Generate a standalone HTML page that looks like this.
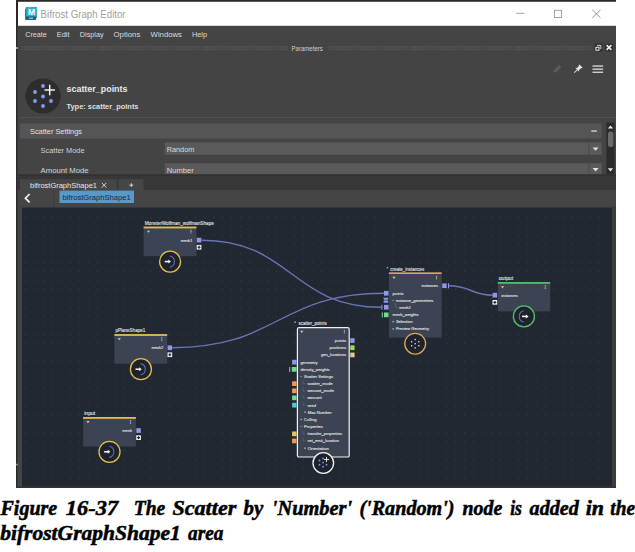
<!DOCTYPE html>
<html><head><meta charset="utf-8"><title>Bifrost Graph Editor</title>
<style>
html,body{margin:0;padding:0;background:#fff;}
body{width:635px;height:552px;overflow:hidden;position:relative;font-family:"Liberation Sans",sans-serif;}
svg{position:absolute;left:0;top:0;}
svg text{font-family:"Liberation Sans",sans-serif;}
svg text.cp{font-family:"Liberation Serif",serif;font-weight:bold;font-style:italic;stroke:#000;stroke-width:0.5px;}
</style></head><body>
<svg width="635" height="552" viewBox="0 0 635 552">
<defs>
<pattern id="dots" x="25.0" y="378.5" width="8.96" height="8.975" patternUnits="userSpaceOnUse"><rect x="0" y="0" width="1.1" height="1.1" fill="#353c47"/></pattern>
<pattern id="grip" x="22" y="46.2" width="2.08" height="1.4" patternUnits="userSpaceOnUse"><rect x="0" y="0" width="1.04" height="0.8" fill="#626262"/></pattern>
</defs>

<rect x="16" y="0" width="600" height="488" fill="#444444"/>
<rect x="16" y="0" width="600" height="1.8" fill="#2a2a2a"/>
<rect x="16" y="0" width="1.4" height="488" fill="#2a2a2a"/>
<rect x="16" y="0" width="2" height="26" fill="#2a2a2a"/>
<rect x="16" y="47" width="2" height="2" fill="#9a9a9a"/>
<rect x="16" y="463.8" width="2" height="1.6" fill="#8a8a8a"/>
<rect x="18" y="1.8" width="598" height="24" fill="#ffffff"/>
<g><path d="M26.2 7 H36.8 V17.3 L35.6 19.8 H25 V9.5 Z" fill="#1f7f9e"/><rect x="26.4" y="7" width="10.4" height="9.6" rx="1.2" fill="#2fb3d2"/><rect x="26" y="16.6" width="9.8" height="3.2" fill="#175d78"/><text x="31.6" y="14.6" font-size="8.5" font-weight="bold" fill="#fff" text-anchor="middle">M</text><rect x="28.8" y="17.6" width="4.4" height="1.2" fill="#9fd3e2"/></g>
<text x="40.6" y="17.8" font-size="11" fill="#a0a0a0" textLength="85" lengthAdjust="spacingAndGlyphs">Bifrost Graph Editor</text>
<path d="M516.3 13.3 H524.4" stroke="#9a9a9a" stroke-width="0.9" fill="none"/>
<rect x="554.4" y="10.3" width="7.2" height="7.2" stroke="#9a9a9a" stroke-width="0.9" fill="none"/>
<path d="M592.3 9.9 L600.5 17.8 M600.5 9.9 L592.3 17.8" stroke="#8a8a8a" stroke-width="0.9" fill="none"/>
<text x="25.3" y="37.2" font-size="7.6" fill="#dcdcdc" textLength="21.5" lengthAdjust="spacingAndGlyphs">Create</text>
<text x="56.7" y="37.2" font-size="7.6" fill="#dcdcdc" textLength="12.9" lengthAdjust="spacingAndGlyphs">Edit</text>
<text x="79.8" y="37.2" font-size="7.6" fill="#dcdcdc" textLength="23.8" lengthAdjust="spacingAndGlyphs">Display</text>
<text x="113.6" y="37.2" font-size="7.6" fill="#dcdcdc" textLength="26.7" lengthAdjust="spacingAndGlyphs">Options</text>
<text x="150.6" y="37.2" font-size="7.6" fill="#dcdcdc" textLength="31.4" lengthAdjust="spacingAndGlyphs">Windows</text>
<text x="191.9" y="37.2" font-size="7.6" fill="#dcdcdc" textLength="15.2" lengthAdjust="spacingAndGlyphs">Help</text>
<rect x="22" y="46.2" width="266" height="3.7" fill="url(#grip)"/>
<rect x="327" y="46.2" width="264" height="3.7" fill="url(#grip)"/>
<text x="291.5" y="51" font-size="6.8" fill="#d0d0d0" textLength="31.3" lengthAdjust="spacingAndGlyphs">Parameters</text>
<rect x="594.6" y="43.5" width="8" height="7.9" rx="1.2" fill="#2e2e2e"/>
<path d="M597.0 45.4 H600.9 V49.2" stroke="#d8d8d8" stroke-width="1" fill="none"/>
<rect x="595.9" y="47.3" width="3.1" height="2.9" stroke="#ececec" stroke-width="1" fill="#2b2b2b"/>
<rect x="605.2" y="43.5" width="7.6" height="7.9" rx="1.2" fill="#2e2e2e"/>
<path d="M606.6 45.1 L611.4 49.9 M611.4 45.1 L606.6 49.9" stroke="#eef2f6" stroke-width="1.5" fill="none"/>
<path d="M553.4 72.8 L554.2 69.8 L559.2 64.9 L561.3 67.0 L556.4 72.0 Z" fill="#5c5c5c"/>
<g transform="translate(578 69) rotate(45)"><path d="M-2.2 -4.2 H2.2 V-3 H1.5 V0 L2.8 1.2 H-2.8 L-1.5 0 V-3 H-2.2 Z M-0.4 1.2 H0.4 V4.8 L0 5.6 L-0.4 4.8 Z" fill="#e4e4e4"/></g>
<rect x="592.5" y="65.4" width="10.6" height="1.3" fill="#dcdcdc"/>
<rect x="592.5" y="68.5" width="10.6" height="1.3" fill="#dcdcdc"/>
<rect x="592.5" y="71.6" width="10.6" height="1.3" fill="#dcdcdc"/>
<circle cx="43" cy="96" r="17.6" fill="#2d2d2d"/>
<circle cx="35" cy="92" r="1.9" fill="#7fa0ec"/>
<circle cx="35" cy="101" r="1.9" fill="#7fa0ec"/>
<circle cx="43" cy="86" r="1.9" fill="#7fa0ec"/>
<circle cx="43" cy="96.5" r="1.9" fill="#7fa0ec"/>
<circle cx="43" cy="106" r="1.9" fill="#7fa0ec"/>
<circle cx="51" cy="101" r="1.9" fill="#7fa0ec"/>
<path d="M49.7 84.8 V95.2 M44.5 90 H54.9" stroke="#f2f2f2" stroke-width="1.5" fill="none"/>
<text x="66.5" y="92.3" font-size="8.8" font-weight="bold" fill="#e8e8e8" textLength="61" lengthAdjust="spacingAndGlyphs">scatter_points</text>
<text x="66.5" y="109" font-size="7.4" font-weight="bold" fill="#dedede" textLength="72" lengthAdjust="spacingAndGlyphs">Type: scatter_points</text>
<rect x="20" y="117" width="596" height="1" fill="#505050"/>
<rect x="20" y="123.5" width="581.7" height="15" fill="#555555"/>
<text x="30" y="134" font-size="7.4" fill="#e4e4e4" textLength="52" lengthAdjust="spacingAndGlyphs">Scatter Settings</text>
<rect x="591.3" y="130.4" width="5.6" height="1.3" fill="#dcdcdc"/>
<text x="40.6" y="152.6" font-size="7.6" fill="#d4d4d4" textLength="44" lengthAdjust="spacingAndGlyphs">Scatter Mode</text>
<rect x="164.8" y="142.4" width="436.9" height="12.4" fill="#5a5a5a"/>
<rect x="588.4" y="142.4" width="1" height="12.4" fill="#4a4a4a"/>
<text x="166.8" y="152" font-size="7.6" fill="#dcdcdc" textLength="27.4" lengthAdjust="spacingAndGlyphs">Random</text>
<path d="M592.6 147.4 H598.6 L595.6 150.8 Z" fill="#e0e0e0"/>
<text x="40.6" y="173.4" font-size="7.6" fill="#d4d4d4" textLength="48" lengthAdjust="spacingAndGlyphs">Amount Mode</text>
<rect x="164.8" y="163.2" width="436.9" height="11.3" fill="#5a5a5a"/>
<rect x="588.4" y="163.2" width="1" height="11.3" fill="#4a4a4a"/>
<text x="166.8" y="172.8" font-size="7.6" fill="#dcdcdc" textLength="27" lengthAdjust="spacingAndGlyphs">Number</text>
<path d="M592.6 168 H598.6 L595.6 171.4 Z" fill="#e0e0e0"/>
<rect x="606.4" y="122.6" width="8" height="51.9" fill="#2b2b2b"/>
<path d="M607.8 128.6 L610.5 125.4 L613.2 128.6 Z" fill="#e8e8e8"/>
<rect x="608" y="131.6" width="5.4" height="15.4" rx="2.2" fill="#6a6a6a"/>
<path d="M607.8 168.2 H613.2 L610.5 171.4 Z" fill="#e8e8e8"/>
<rect x="18" y="174.5" width="598" height="15.5" fill="#373737"/>
<rect x="18" y="174.5" width="598" height="1.2" fill="#303030"/>
<rect x="20" y="179.2" width="96.8" height="10.8" fill="#464646"/>
<rect x="118.3" y="179.2" width="25.2" height="10.8" fill="#464646"/>
<text x="30" y="188" font-size="7.4" fill="#e8e8e8" textLength="67" lengthAdjust="spacingAndGlyphs">bifrostGraphShape1</text>
<path d="M101.8 182.8 L106.4 187.6 M106.4 182.8 L101.8 187.6" stroke="#e0e0e0" stroke-width="0.9" fill="none"/>
<path d="M131.3 183.2 V187 M129.4 185.1 H133.2" stroke="#e0e0e0" stroke-width="0.9" fill="none"/>
<rect x="20" y="190" width="594" height="16.7" fill="#454545"/>
<path d="M29.6 194 L25.4 198.2 L29.6 202.4" stroke="#f0f0f0" stroke-width="1.7" fill="none"/>
<rect x="53.6" y="190" width="0.8" height="16.7" fill="#3a3a3a"/>
<rect x="59.5" y="190.6" width="74.5" height="12.4" fill="#5898ca"/>
<text x="62.6" y="199.6" font-size="7.4" fill="#1c2a44" textLength="68.2" lengthAdjust="spacingAndGlyphs">bifrostGraphShape1</text>
<rect x="22" y="207.6" width="590.2" height="279" fill="#222831"/>
<rect x="22" y="209" width="590.2" height="277.6" fill="url(#dots)"/>
<rect x="612.5" y="206.7" width="3.5" height="281.3" fill="#3c3c3c"/>
<rect x="16" y="486.5" width="600" height="1.5" fill="#333333"/>
<path d="M201.5 240.2 C291.5 240.2 291.5 307.3 381.5 307.3" stroke="#6b74b4" stroke-width="1.4" fill="none"/>
<path d="M172.2 347.7 C278.1 347.7 278.1 293.3 384 293.3" stroke="#6b74b4" stroke-width="1.4" fill="none"/>
<path d="M449 285.8 C470.9 285.8 470.9 295.2 492.7 295.2" stroke="#6b74b4" stroke-width="1.4" fill="none"/>
<rect x="143.6" y="226.6" width="52.8" height="29.6" fill="#3c4453"/><rect x="143.6" y="226.6" width="52.8" height="1.8" fill="#e3bd52"/><text x="144.7" y="224.85" font-size="4.9" fill="#e6e6e6" stroke="#e6e6e6" stroke-width="0.1" text-anchor="start" textLength="69.3" lengthAdjust="spacingAndGlyphs">MonsterWolfman_wolfmanShape</text><path d="M146.9 230.7 H150.1 L148.5 232.8 Z" fill="#c8ccd4"/><rect x="190.55" y="229.70" width="0.9" height="1.0" fill="#c8ccd4"/><rect x="190.55" y="231.05" width="0.9" height="1.0" fill="#c8ccd4"/><rect x="190.55" y="232.40" width="0.9" height="1.0" fill="#c8ccd4"/><text x="192.4" y="241.65" font-size="4.2" fill="#e6e6e6" stroke="#e6e6e6" stroke-width="0.1" text-anchor="end" textLength="11.6" lengthAdjust="spacingAndGlyphs">mesh1</text><rect x="196.8" y="237.8" width="4.5" height="4.7" fill="#8d97ee"/><rect x="196.7" y="244.9" width="4.7" height="4.7" fill="#f2f2f2"/><path d="M199.05 245.8 V248.7 M197.6 247.25 H200.5" stroke="#1c2028" stroke-width="1.15" fill="none"/><circle cx="170.1" cy="261.6" r="10.5" fill="#1e222a" stroke="#e3bd52" stroke-width="1.3"/><path d="M164.7 261.6 H168.9" stroke="#f0f0f0" stroke-width="1.6" fill="none"/><path d="M168.3 259.6 L171.0 261.6 L168.3 263.6 Z" fill="#f0f0f0"/><path d="M169.8 256.0 A5.7 5.7 0 0 1 169.8 267.2" stroke="#5b6db4" stroke-width="1.1" fill="none"/>
<rect x="114.4" y="334.1" width="52.8" height="29.6" fill="#3c4453"/><rect x="114.4" y="334.1" width="52.8" height="1.8" fill="#e3bd52"/><text x="115.5" y="332.35" font-size="4.9" fill="#e6e6e6" stroke="#e6e6e6" stroke-width="0.1" text-anchor="start" textLength="29.7" lengthAdjust="spacingAndGlyphs">pPlaneShape1</text><path d="M117.7 338.2 H120.9 L119.30000000000001 340.3 Z" fill="#c8ccd4"/><rect x="161.35" y="337.20" width="0.9" height="1.0" fill="#c8ccd4"/><rect x="161.35" y="338.55" width="0.9" height="1.0" fill="#c8ccd4"/><rect x="161.35" y="339.90" width="0.9" height="1.0" fill="#c8ccd4"/><text x="163.2" y="349.15" font-size="4.2" fill="#e6e6e6" stroke="#e6e6e6" stroke-width="0.1" text-anchor="end" textLength="11.8" lengthAdjust="spacingAndGlyphs">mesh2</text><rect x="167.6" y="345.4" width="4.5" height="4.7" fill="#8d97ee"/><rect x="167.5" y="352.4" width="4.7" height="4.7" fill="#f2f2f2"/><path d="M169.85 353.3 V356.2 M168.4 354.75 H171.3" stroke="#1c2028" stroke-width="1.15" fill="none"/><circle cx="140.9" cy="369.2" r="10.5" fill="#1e222a" stroke="#e3bd52" stroke-width="1.3"/><path d="M135.5 369.2 H139.7" stroke="#f0f0f0" stroke-width="1.6" fill="none"/><path d="M139.1 367.2 L141.8 369.2 L139.1 371.2 Z" fill="#f0f0f0"/><path d="M140.6 363.6 A5.7 5.7 0 0 1 140.6 374.8" stroke="#5b6db4" stroke-width="1.1" fill="none"/>
<rect x="83.1" y="417.0" width="52.8" height="29.6" fill="#3c4453"/><rect x="83.1" y="417.0" width="52.8" height="1.8" fill="#e3bd52"/><text x="84.2" y="415.25" font-size="4.9" fill="#e6e6e6" stroke="#e6e6e6" stroke-width="0.1" text-anchor="start" textLength="11" lengthAdjust="spacingAndGlyphs">input</text><path d="M86.4 421.1 H89.6 L88.0 423.2 Z" fill="#c8ccd4"/><rect x="130.05" y="420.10" width="0.9" height="1.0" fill="#c8ccd4"/><rect x="130.05" y="421.45" width="0.9" height="1.0" fill="#c8ccd4"/><rect x="130.05" y="422.80" width="0.9" height="1.0" fill="#c8ccd4"/><text x="131.9" y="432.05" font-size="4.2" fill="#e6e6e6" stroke="#e6e6e6" stroke-width="0.1" text-anchor="end" textLength="9.6" lengthAdjust="spacingAndGlyphs">mesh</text><rect x="136.3" y="428.2" width="4.5" height="4.7" fill="#8d97ee"/><rect x="136.2" y="435.3" width="4.7" height="4.7" fill="#f2f2f2"/><path d="M138.55 436.2 V439.1 M137.1 437.65 H140.0" stroke="#1c2028" stroke-width="1.15" fill="none"/><circle cx="109.5" cy="451.8" r="10.5" fill="#1e222a" stroke="#e3bd52" stroke-width="1.3"/><path d="M104.1 451.8 H108.3" stroke="#f0f0f0" stroke-width="1.6" fill="none"/><path d="M107.7 449.8 L110.4 451.8 L107.7 453.8 Z" fill="#f0f0f0"/><path d="M109.2 446.2 A5.7 5.7 0 0 1 109.2 457.4" stroke="#5b6db4" stroke-width="1.1" fill="none"/>
<rect x="497.8" y="282.0" width="52.4" height="29.4" fill="#3c4453"/>
<rect x="497.8" y="282.0" width="52.4" height="1.8" fill="#4fbf6b"/>
<text x="498.7" y="280.15" font-size="4.9" fill="#e6e6e6" stroke="#e6e6e6" stroke-width="0.1" text-anchor="start" textLength="14.4" lengthAdjust="spacingAndGlyphs">output</text>
<path d="M500.9 286.2 H504.1 L502.5 288.3 Z" fill="#c8ccd4"/>
<rect x="544.75" y="285.20" width="0.9" height="1.0" fill="#c8ccd4"/><rect x="544.75" y="286.55" width="0.9" height="1.0" fill="#c8ccd4"/><rect x="544.75" y="287.90" width="0.9" height="1.0" fill="#c8ccd4"/>
<text x="501.2" y="297.05" font-size="4.2" fill="#e6e6e6" stroke="#e6e6e6" stroke-width="0.1" text-anchor="start" textLength="16.4" lengthAdjust="spacingAndGlyphs">instances</text>
<rect x="492.6" y="292.8" width="4.5" height="4.7" fill="#8d97ee"/>
<rect x="492.5" y="300.0" width="4.7" height="4.7" fill="#f2f2f2"/><path d="M494.85 300.9 V303.8 M493.4 302.35 H496.3" stroke="#1c2028" stroke-width="1.15" fill="none"/>
<circle cx="523.9" cy="316.4" r="10.5" fill="#1e222a" stroke="#4fbf6b" stroke-width="1.3"/><path d="M522.0 316.4 H526.5" stroke="#f0f0f0" stroke-width="1.6" fill="none"/><path d="M525.9 314.4 L528.6 316.4 L525.9 318.4 Z" fill="#f0f0f0"/><path d="M523.9 310.8 A5.7 5.7 0 0 0 523.9 322.0" stroke="#5b6db4" stroke-width="1.1" fill="none"/>
<rect x="388.9" y="272.4" width="52.8" height="65.2" fill="#3c4453"/>
<rect x="388.9" y="272.4" width="52.8" height="1.6" fill="#d9a660"/>
<circle cx="387.4" cy="267.6" r="0.9" fill="#6fa8dc"/>
<text x="390.2" y="270.55" font-size="4.9" fill="#e6e6e6" stroke="#e6e6e6" stroke-width="0.1" text-anchor="start" textLength="34.1" lengthAdjust="spacingAndGlyphs">create_instances</text>
<path d="M392.4 276.8 H395.6 L394 278.9 Z" fill="#c8ccd4"/>
<rect x="436.15" y="275.80" width="0.9" height="1.0" fill="#c8ccd4"/><rect x="436.15" y="277.15" width="0.9" height="1.0" fill="#c8ccd4"/><rect x="436.15" y="278.50" width="0.9" height="1.0" fill="#c8ccd4"/>
<text x="437.9" y="287.25" font-size="4.2" fill="#e6e6e6" stroke="#e6e6e6" stroke-width="0.1" text-anchor="end" textLength="16.4" lengthAdjust="spacingAndGlyphs">instances</text>
<rect x="442.2" y="283.4" width="4.5" height="4.7" fill="#8d97ee"/>
<rect x="448" y="283.2" width="1" height="5.2" fill="#8d97ee"/>
<text x="392.5" y="294.85" font-size="4.2" fill="#e6e6e6" stroke="#e6e6e6" stroke-width="0.1" text-anchor="start" textLength="11.2" lengthAdjust="spacingAndGlyphs">points</text>
<rect x="384.0" y="290.9" width="4.5" height="4.7" fill="#8d97ee"/>
<path d="M392.30 300.40 H394.10" stroke="#c4cad6" stroke-width="0.55" fill="none"/><text x="395.9" y="301.85" font-size="4.2" fill="#e6e6e6" stroke="#e6e6e6" stroke-width="0.1" text-anchor="start" textLength="37.4" lengthAdjust="spacingAndGlyphs">instance_geometries</text>
<path d="M383.6 297.7 H388.3 V299.3 L386.9 300.2 L388.3 301.1 V302.7 H383.6 V301.1 L384.8 300.2 L383.6 299.3 Z" fill="#8d97ee"/>
<rect x="384.2" y="299.7" width="3.5" height="0.9" fill="#4a5186"/>
<path d="M395.5 303 V307.4 H398" stroke="#6a7280" stroke-width="0.5" fill="none"/>
<text x="399.3" y="308.85" font-size="4.2" fill="#e6e6e6" stroke="#e6e6e6" stroke-width="0.1" text-anchor="start" textLength="11.6" lengthAdjust="spacingAndGlyphs">mesh1</text>
<rect x="384.0" y="304.9" width="4.5" height="4.7" fill="#8d97ee"/>
<rect x="381.4" y="304.8" width="1" height="5" fill="#8d97ee"/>
<text x="392.5" y="316.35" font-size="4.2" fill="#e6e6e6" stroke="#e6e6e6" stroke-width="0.1" text-anchor="start" textLength="26" lengthAdjust="spacingAndGlyphs">mesh_weights</text>
<rect x="384.0" y="312.5" width="4.5" height="4.7" fill="#74da8c"/>
<rect x="381.8" y="312.4" width="1" height="5" fill="#74da8c"/>
<path d="M392.30 321.70 H394.10 M393.20 320.80 V322.60" stroke="#c4cad6" stroke-width="0.55" fill="none"/><text x="395.9" y="323.15" font-size="4.2" fill="#e6e6e6" stroke="#e6e6e6" stroke-width="0.1" text-anchor="start" textLength="16.7" lengthAdjust="spacingAndGlyphs">Selection</text>
<path d="M392.30 328.90 H394.10 M393.20 328.00 V329.80" stroke="#c4cad6" stroke-width="0.55" fill="none"/><text x="395.9" y="330.35" font-size="4.2" fill="#e6e6e6" stroke="#e6e6e6" stroke-width="0.1" text-anchor="start" textLength="33.2" lengthAdjust="spacingAndGlyphs">Preview Geometry</text>
<circle cx="415.2" cy="343.7" r="10.4" fill="#1e222a" stroke="#d9a660" stroke-width="1.3"/>
<rect x="414.55" y="338.85" width="1.3" height="1.3" fill="#e6e6e6"/>
<rect x="414.55" y="343.05" width="1.3" height="1.3" fill="#e6e6e6"/>
<rect x="414.55" y="347.25" width="1.3" height="1.3" fill="#e6e6e6"/>
<rect x="410.95" y="341.05" width="1.3" height="1.3" fill="#e6e6e6"/>
<rect x="410.95" y="345.05" width="1.3" height="1.3" fill="#e6e6e6"/>
<rect x="418.15" y="341.05" width="1.3" height="1.3" fill="#e6e6e6"/>
<rect x="418.15" y="345.05" width="1.3" height="1.3" fill="#e6e6e6"/>
<rect x="297.40000000000003" y="327.6" width="51.8" height="129.4" rx="1.6" fill="#3c4453" stroke="#f0f0f0" stroke-width="1.2"/>
<circle cx="295.1" cy="322.2" r="0.9" fill="#6fa8dc"/>
<text x="298.4" y="325.35" font-size="4.9" fill="#e6e6e6" stroke="#e6e6e6" stroke-width="0.1" text-anchor="start" textLength="28.3" lengthAdjust="spacingAndGlyphs">scatter_points</text>
<path d="M300.2 330.8 H303.4 L301.8 332.9 Z" fill="#c8ccd4"/>
<rect x="343.85" y="329.80" width="0.9" height="1.0" fill="#c8ccd4"/><rect x="343.85" y="331.15" width="0.9" height="1.0" fill="#c8ccd4"/><rect x="343.85" y="332.50" width="0.9" height="1.0" fill="#c8ccd4"/>
<text x="346.0" y="342.05" font-size="4.2" fill="#e6e6e6" stroke="#e6e6e6" stroke-width="0.1" text-anchor="end" textLength="11.2" lengthAdjust="spacingAndGlyphs">points</text>
<rect x="350.3" y="338.2" width="4.3" height="4.7" fill="#8d97ee"/>
<text x="346.0" y="349.25" font-size="4.2" fill="#e6e6e6" stroke="#e6e6e6" stroke-width="0.1" text-anchor="end" textLength="16.6" lengthAdjust="spacingAndGlyphs">positions</text>
<rect x="350.3" y="345.4" width="4.3" height="4.7" fill="#9bdc5c"/>
<text x="346.0" y="356.45" font-size="4.2" fill="#e6e6e6" stroke="#e6e6e6" stroke-width="0.1" text-anchor="end" textLength="25" lengthAdjust="spacingAndGlyphs">geo_locations</text>
<rect x="350.3" y="352.6" width="4.3" height="4.7" fill="#e3c690"/>
<text x="300.6" y="363.85" font-size="4.2" fill="#e6e6e6" stroke="#e6e6e6" stroke-width="0.1" text-anchor="start" textLength="17" lengthAdjust="spacingAndGlyphs">geometry</text>
<rect x="292.1" y="359.8" width="4.5" height="4.7" fill="#8d97ee"/>
<text x="300.6" y="370.95" font-size="4.2" fill="#e6e6e6" stroke="#e6e6e6" stroke-width="0.1" text-anchor="start" textLength="29" lengthAdjust="spacingAndGlyphs">density_weights</text>
<rect x="291.8" y="367.0" width="4.8" height="4.7" fill="#74da8c"/>
<rect x="289.2" y="366.9" width="1" height="5" fill="#74da8c"/>
<path d="M300.40 376.50 H302.20" stroke="#c4cad6" stroke-width="0.55" fill="none"/><text x="304.0" y="377.95" font-size="4.2" fill="#e6e6e6" stroke="#e6e6e6" stroke-width="0.1" text-anchor="start" textLength="29" lengthAdjust="spacingAndGlyphs">Scatter Settings</text>
<text x="307.4" y="385.15" font-size="4.2" fill="#e6e6e6" stroke="#e6e6e6" stroke-width="0.1" text-anchor="start" textLength="25.2" lengthAdjust="spacingAndGlyphs">scatter_mode</text>
<rect x="292.1" y="381.3" width="4.5" height="4.7" fill="#f09a52"/>
<path d="M303 380.2 V383.7 H305.6" stroke="#6a7280" stroke-width="0.5" fill="none"/>
<text x="307.4" y="392.35" font-size="4.2" fill="#e6e6e6" stroke="#e6e6e6" stroke-width="0.1" text-anchor="start" textLength="26.6" lengthAdjust="spacingAndGlyphs">amount_mode</text>
<rect x="292.1" y="388.5" width="4.5" height="4.7" fill="#f09a52"/>
<path d="M303 387.4 V390.9 H305.6" stroke="#6a7280" stroke-width="0.5" fill="none"/>
<text x="307.4" y="399.35" font-size="4.2" fill="#e6e6e6" stroke="#e6e6e6" stroke-width="0.1" text-anchor="start" textLength="14.2" lengthAdjust="spacingAndGlyphs">amount</text>
<rect x="292.1" y="395.5" width="4.5" height="4.7" fill="#74da8c"/>
<path d="M303 394.4 V397.9 H305.6" stroke="#6a7280" stroke-width="0.5" fill="none"/>
<text x="307.4" y="406.55" font-size="4.2" fill="#e6e6e6" stroke="#e6e6e6" stroke-width="0.1" text-anchor="start" textLength="8.6" lengthAdjust="spacingAndGlyphs">seed</text>
<rect x="292.1" y="402.8" width="4.5" height="4.7" fill="#4ec6dc"/>
<path d="M303 401.6 V405.1 H305.6" stroke="#6a7280" stroke-width="0.5" fill="none"/>
<path d="M304.10 412.20 H305.90 M305.00 411.30 V413.10" stroke="#c4cad6" stroke-width="0.55" fill="none"/><text x="307.7" y="413.65" font-size="4.2" fill="#e6e6e6" stroke="#e6e6e6" stroke-width="0.1" text-anchor="start" textLength="23.9" lengthAdjust="spacingAndGlyphs">Max Number</text>
<path d="M300.40 419.50 H302.20 M301.30 418.60 V420.40" stroke="#c4cad6" stroke-width="0.55" fill="none"/><text x="304.0" y="420.95" font-size="4.2" fill="#e6e6e6" stroke="#e6e6e6" stroke-width="0.1" text-anchor="start" textLength="12.5" lengthAdjust="spacingAndGlyphs">Culling</text>
<path d="M300.40 426.70 H302.20" stroke="#c4cad6" stroke-width="0.55" fill="none"/><text x="304.0" y="428.15" font-size="4.2" fill="#e6e6e6" stroke="#e6e6e6" stroke-width="0.1" text-anchor="start" textLength="18.8" lengthAdjust="spacingAndGlyphs">Properties</text>
<text x="307.4" y="435.35" font-size="4.2" fill="#e6e6e6" stroke="#e6e6e6" stroke-width="0.1" text-anchor="start" textLength="34.6" lengthAdjust="spacingAndGlyphs">transfer_properties</text>
<rect x="292.1" y="431.5" width="4.5" height="4.7" fill="#e3c65c"/>
<path d="M303 430.4 V433.9 H305.6" stroke="#6a7280" stroke-width="0.5" fill="none"/>
<text x="307.4" y="442.45" font-size="4.2" fill="#e6e6e6" stroke="#e6e6e6" stroke-width="0.1" text-anchor="start" textLength="31.6" lengthAdjust="spacingAndGlyphs">set_emit_location</text>
<rect x="292.1" y="438.6" width="4.5" height="4.7" fill="#f09a52"/>
<path d="M303 437.5 V441.0 H305.6" stroke="#6a7280" stroke-width="0.5" fill="none"/>
<path d="M304.10 448.20 H305.90 M305.00 447.30 V449.10" stroke="#c4cad6" stroke-width="0.55" fill="none"/><text x="307.7" y="449.65" font-size="4.2" fill="#e6e6e6" stroke="#e6e6e6" stroke-width="0.1" text-anchor="start" textLength="21" lengthAdjust="spacingAndGlyphs">Orientation</text>
<circle cx="323.3" cy="463.0" r="10.3" fill="#1e222a" stroke="#f2f2f2" stroke-width="1.3"/>
<circle cx="319.5" cy="460.5" r="0.95" fill="#7894e2"/>
<circle cx="319.5" cy="464.7" r="0.95" fill="#7894e2"/>
<circle cx="323.0" cy="458.4" r="0.95" fill="#7894e2"/>
<circle cx="323.0" cy="462.6" r="0.95" fill="#7894e2"/>
<circle cx="323.0" cy="466.8" r="0.95" fill="#7894e2"/>
<circle cx="326.5" cy="464.7" r="0.95" fill="#7894e2"/>
<path d="M326.5 457.0 V462.0 M324.0 459.5 H329.0" stroke="#f2f2f2" stroke-width="0.9" fill="none"/>
<text x="0.5" y="515.4" class="cp" font-size="20" fill="#000" textLength="56.7" lengthAdjust="spacingAndGlyphs">Figure</text>
<text x="65.8" y="515.4" class="cp" font-size="20" fill="#000" textLength="52.3" lengthAdjust="spacingAndGlyphs">16-37</text>
<text x="133.8" y="515.4" class="cp" font-size="20" fill="#000" textLength="31.5" lengthAdjust="spacingAndGlyphs">The</text>
<text x="172.4" y="515.4" class="cp" font-size="20" fill="#000" textLength="64.0" lengthAdjust="spacingAndGlyphs">Scatter</text>
<text x="243.5" y="515.4" class="cp" font-size="20" fill="#000" textLength="19.7" lengthAdjust="spacingAndGlyphs">by</text>
<text x="271.8" y="515.4" class="cp" font-size="20" fill="#000" textLength="80.3" lengthAdjust="spacingAndGlyphs">'Number'</text>
<text x="359.4" y="515.4" class="cp" font-size="20" fill="#000" textLength="95.1" lengthAdjust="spacingAndGlyphs">('Random')</text>
<text x="462.5" y="515.4" class="cp" font-size="20" fill="#000" textLength="39.7" lengthAdjust="spacingAndGlyphs">node</text>
<text x="510.2" y="515.4" class="cp" font-size="20" fill="#000" textLength="11.8" lengthAdjust="spacingAndGlyphs">is</text>
<text x="529.6" y="515.4" class="cp" font-size="20" fill="#000" textLength="49.2" lengthAdjust="spacingAndGlyphs">added</text>
<text x="585.7" y="515.4" class="cp" font-size="20" fill="#000" textLength="18.3" lengthAdjust="spacingAndGlyphs">in</text>
<text x="610.3" y="515.4" class="cp" font-size="20" fill="#000" textLength="24.7" lengthAdjust="spacingAndGlyphs">the</text>
<text x="0.2" y="539.6" class="cp" font-size="20" fill="#000" textLength="180.6" lengthAdjust="spacingAndGlyphs">bifrostGraphShape1</text>
<text x="188.1" y="539.6" class="cp" font-size="20" fill="#000" textLength="35.3" lengthAdjust="spacingAndGlyphs">area</text>
</svg>
</body></html>
